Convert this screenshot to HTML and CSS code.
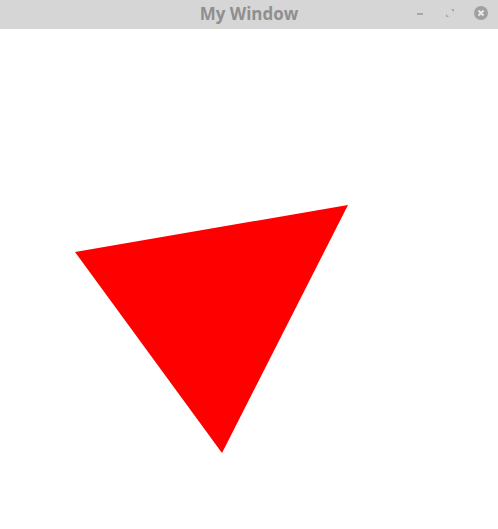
FILE: index.html
```html
<!DOCTYPE html>
<html>
<head>
<meta charset="utf-8">
<link rel="stylesheet" href="styles.css">
</head>
<body>
<div class="window">
  <div class="titlebar">
    <span class="title">My Window</span>
    <div class="controls">
      <svg class="btn" width="14" height="14" viewBox="0 0 14 14"><rect x="4" y="7" width="6" height="2" fill="#a8a8a8"/></svg>
      <svg class="btn" width="14" height="14" viewBox="0 0 14 14"><path d="M8 3 H11 V6 Z M3 8 V11 H6 Z" fill="#a8a8a8"/></svg>
      <svg class="btn close" width="16" height="16" viewBox="0 0 16 16"><circle cx="8" cy="8" r="7" fill="#a0a0a0"/><path d="M5.5 5.5 L10.5 10.5 M10.5 5.5 L5.5 10.5" stroke="#e8e8e8" stroke-width="2"/></svg>
    </div>
  </div>
  <div class="canvas">
    <svg width="498" height="500" viewBox="0 0 498 500"><polygon points="75,223 348,176 222,424" fill="#ff0000"/></svg>
  </div>
</div>
</body>
</html>
```
FILE: styles.css
```css
html, body { margin: 0; padding: 0; background: #fff; }
.window { width: 498px; height: 529px; display: flex; flex-direction: column; }
.titlebar {
  height: 29px;
  background: #d6d6d6;
  position: relative;
  display: flex;
  align-items: center;
  justify-content: center;
  flex: none;
}
.title {
  font-family: "Open Sans", sans-serif;
  font-weight: bold;
  font-size: 17px;
  color: #8f8f8f;
  line-height: 1;
  margin-top: -2px;
}
.controls {
  position: absolute;
  right: 9px;
  top: 5px;
  display: flex;
  align-items: center;
  gap: 16px;
}
.btn { display: block; }
.canvas { flex: 1; background: #fff; }
.canvas svg { display: block; }
```
